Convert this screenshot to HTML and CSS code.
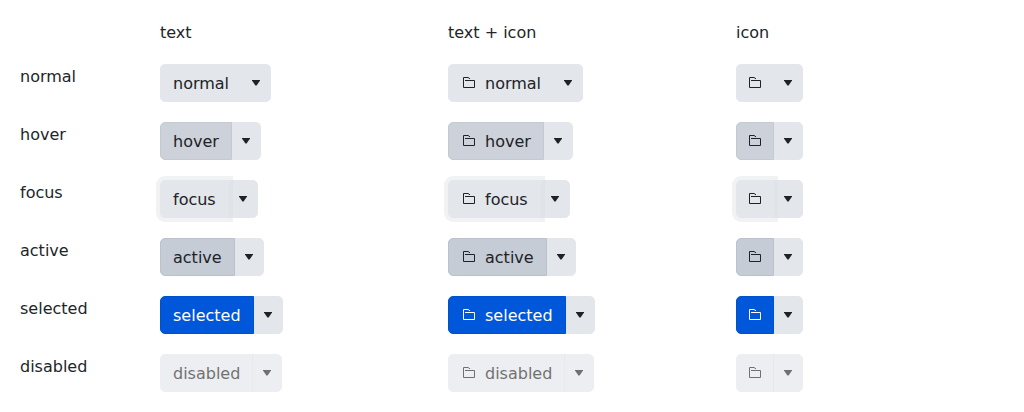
FILE: index.html
```html
<!DOCTYPE html>
<html lang="en">
<head>
<meta charset="utf-8">
<title>Split buttons</title>
<link rel="stylesheet" href="styles.css">
</head>
<body>
<svg class="sprite" width="0" height="0" aria-hidden="true">
  <symbol id="folder" viewBox="0 0 12 12"><path d="M2 3.5H11.500V10.500H.5V.5H5.500L6 1.500H7" fill="none" stroke="currentColor"/></symbol>
  <symbol id="caret" viewBox="0 0 8 6"><path d="M0 0H8V.6L4.600 5.400H3.400L0 .6Z" fill="currentColor"/></symbol>
</svg>
<main class="grid" id="grid">
  <span></span><span class="text">text</span><span class="text">text + icon</span><span class="text">icon</span>
</main>
<script src="app.js"></script>
</body>
</html>
```
FILE: styles.css
```css
body {
  margin: 0;
  background: #fff;
  color: #212529;
  font: 16px/24px "DejaVu Sans", sans-serif;
}

.sprite {
  position: absolute;
}

.grid {
  display: grid;
  grid-template-columns: 140px repeat(3, 1fr);
  row-gap: 20px;
  padding: 20px 0 20px 20px;
}

.text {
  display: block;
  padding-top: 2px;
  line-height: 22px;
}

.split {
  display: flex;
}

.btn {
  display: flex;
  align-items: center;
  margin: 0;
  padding: 6px 12px;
  min-height: 38px;
  border: 1px solid #e3e6eb;
  background: #e3e6eb;
  color: #202227;
  font: inherit;
}

.main {
  position: relative;
  z-index: 1;
  border-radius: 5px 0 0 5px;
}

.toggle {
  justify-content: center;
  width: 30px;
  margin-left: -1px;
  padding: 0;
  border-radius: 0 5px 5px 0;
}

.icon {
  display: block;
  width: 12px;
  height: 12px;
}

.with-text .icon {
  margin: 0 10px 0 2px;
}

.caret {
  display: block;
  width: 8px;
  height: 6px;
}

.hover .main {
  background: #cdd1da;
  border-color: #c4cad3;
}

.focus .main {
  box-shadow: 0 0 0 4px rgba(220, 222, 227, 0.4);
}

.active .main {
  background: #c5ccd5;
  border-color: #bbc2cd;
}

.selected .main {
  background: #0057d9;
  border-color: #0052cc;
  color: #fff;
}

.btn:disabled {
  color: #252525;
  opacity: 0.65;
}
```
FILE: app.js
```js
const grid = document.getElementById("grid");
const states = ["normal", "hover", "focus", "active", "selected", "disabled"];
const folder = '<svg class="icon" aria-hidden="true"><use href="#folder"/></svg>';
const caret = '<svg class="caret" aria-hidden="true"><use href="#caret"/></svg>';

function splitButton(state, hasIcon, hasText) {
  const off = state === "disabled" ? " disabled" : "";
  const kind = hasIcon && hasText ? " with-text" : "";
  const text = hasText ? `<span class="text">${state}</span>` : "";
  return `<div class="split ${state}${kind}">
    <button type="button" class="btn main" aria-label="${state}"${off}>${hasIcon ? folder : ""}${text}</button>
    <button type="button" class="btn toggle" aria-label="${state} menu"${off}>${caret}</button>
  </div>`;
}

for (const state of states) {
  grid.insertAdjacentHTML("beforeend",
    `<span class="text">${state}</span>` +
    splitButton(state, false, true) +
    splitButton(state, true, true) +
    splitButton(state, true, false));
}
```
